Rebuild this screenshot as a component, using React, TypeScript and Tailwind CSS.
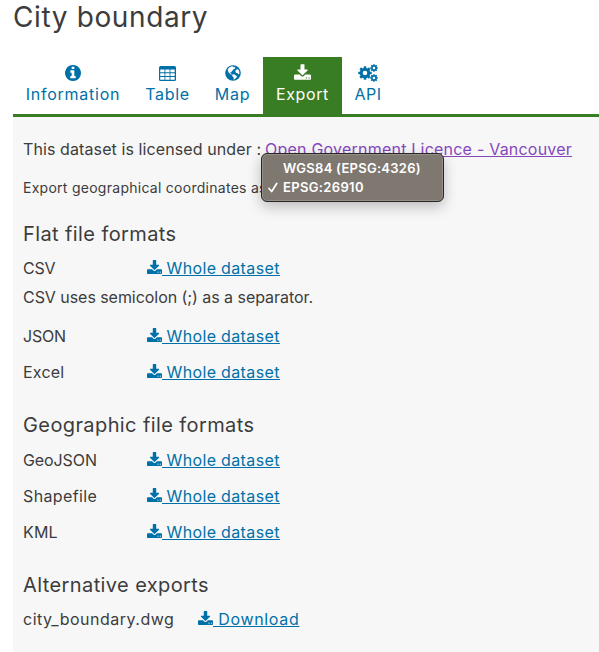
import type { ReactNode } from "react";

function DownloadIcon({ className }: { className: string }) {
  return (
    <svg viewBox="0 0 1664 1536" fill="currentColor" className={className}>
      <path d="M1280 1344q0-26-19-45t-45-19-45 19-19 45 19 45 45 19 45-19 19-45zm256 0q0-26-19-45t-45-19-45 19-19 45 19 45 45 19 45-19 19-45zm128-224v320q0 40-28 68t-68 28h-1472q-40 0-68-28t-28-68v-320q0-40 28-68t68-28h465l135 136q58 56 136 56t136-56l136-136h464q40 0 68 28t28 68zm-325-569q17 41-14 70l-448 448q-18 19-45 19t-45-19l-448-448q-31-29-14-70 17-39 59-39h256v-448q0-26 19-45t45-19h256q26 0 45 19t19 45v448h256q42 0 59 39z" />
    </svg>
  );
}

function InfoIcon() {
  return (
    <svg viewBox="128 128 1536 1536" fill="currentColor" className="size-4">
      <path d="M1152 1376v-160q0-14-9-23t-23-9h-96v-512q0-14-9-23t-23-9h-320q-14 0-23 9t-9 23v160q0 14 9 23t23 9h96v320h-96q-14 0-23 9t-9 23v160q0 14 9 23t23 9h448q14 0 23-9t9-23zm-128-896v-160q0-14-9-23t-23-9h-192q-14 0-23 9t-9 23v160q0 14 9 23t23 9h192q14 0 23-9t9-23zm640 416q0 209-103 385.500t-279.500 279.500-385.500 103-385.500-103-279.500-279.500-103-385.500 103-385.500 279.500-279.500 385.500-103 385.500 103 279.500 279.500 103 385.500z" />
    </svg>
  );
}

function TableIcon() {
  return (
    <svg viewBox="0 0 17 15" className="h-[15px] w-[17px]">
      <rect width="17" height="15" rx="1.500" fill="currentColor" />
      <g fill="#fff">
        {[3.6, 7.3, 11].map((y) =>
          [1.2, 6.3, 11.4].map((x) => <rect key={`${x}-${y}`} x={x} y={y} width="4.300" height="2.700" rx="0.300" />),
        )}
      </g>
    </svg>
  );
}

function GlobeIcon() {
  return (
    <svg viewBox="0 0 16 16" className="size-4">
      <circle cx="8" cy="8" r="7.800" fill="currentColor" />
      <path
        fill="#fff"
        d="M6.100 1.400 8.400 1.200 8 2.200 9.500 2 10.500 3 9.300 4 8.300 4.300 7.800 5.500 6.600 6.300 6.800 7.200 5.800 6.900 5.200 8 6.500 8.700 7 9.700 5.600 9.300 3.600 7.600 2.900 5.700 2.600 4.400 4.200 2.500ZM7.300 9.500 9 9.300 11.300 10.700 12.200 11.500 11 13.100 9.300 14.400 8.600 14.500 8.700 12.500 7.300 11.200ZM10.700 5.200 12 4.200 13.300 4.600 14.300 6.600 14.400 8.800 13.500 9.500 12.600 8.200 11.200 7.900 10.300 6.700Z"
      />
    </svg>
  );
}

function Gear({ x, y, r, hole }: { x: number; y: number; r: number; hole: number }) {
  return (
    <g transform={`translate(${x} ${y})`}>
      <circle r={(r * 0.78 + hole) / 2} fill="none" stroke="currentColor" strokeWidth={r * 0.78 - hole} />
      {[0, 45, 90, 135, 180, 225, 270, 315].map((a) => (
        <rect key={a} x={-r * 0.19} y={-r} width={r * 0.38} height={r * 0.35} fill="currentColor" transform={`rotate(${a})`} />
      ))}
    </g>
  );
}

function GearsIcon() {
  return (
    <svg viewBox="0 0 20 18" className="h-[18px] w-5">
      <Gear x={7} y={9} r={6.700} hole={2.300} />
      <Gear x={16} y={4} r={3.800} hole={1.300} />
      <Gear x={16} y={14} r={3.800} hole={1.300} />
    </svg>
  );
}

function Tab({ icon, active, className, children }: { icon: ReactNode; active?: boolean; className: string; children: ReactNode }) {
  return (
    <a className={`flex h-[57px] flex-col items-center pt-[7px] ${active ? "bg-[#387c24] text-white" : "text-[#0070a8]"} ${className}`}>
      <span className="flex h-[18px] items-center">{icon}</span>
      <span className="leading-6">{children}</span>
    </a>
  );
}

function Download({ children, className }: { children: ReactNode; className: string }) {
  return (
    <a className="flex items-center text-[#0070a8]">
      <DownloadIcon className="mb-0.5 h-3.5 w-[15px] shrink-0" />
      <span className={`whitespace-pre underline decoration-1 underline-offset-[1px] ${className}`}>{children}</span>
    </a>
  );
}

function Row({ label, className }: { label: string; className: string }) {
  return (
    <div className="flex h-6 leading-6">
      <span className={`w-[124px] ${className}`}>{label}</span>
      <Download className="tracking-[0.400px] [word-spacing:-0.400px]"> Whole dataset</Download>
    </div>
  );
}

function Heading({ children }: { children: ReactNode }) {
  return <h2 className="text-xl leading-7 tracking-[0.400px]">{children}</h2>;
}

export default function App() {
  return (
    <div className="h-[652px] w-[599px] overflow-hidden bg-white pl-[13px] font-['Inter',sans-serif] text-base whitespace-nowrap text-[#3c3c3c]">
      <h1 className="h-[57px] text-[28px] leading-[35px] tracking-[0.620px]">City boundary</h1>
      <nav className="flex h-[60px] border-b-[3px] border-[#387c24]">
        <Tab icon={<InfoIcon />} className="w-[120px] tracking-[0.750px]">Information</Tab>
        <Tab icon={<TableIcon />} className="w-[69px] tracking-[0.650px]">Table</Tab>
        <Tab icon={<GlobeIcon />} className="w-[61px] tracking-[0.800px]">Map</Tab>
        <Tab icon={<DownloadIcon className="mb-0.5 h-4 w-[17px]" />} active className="w-[79px] tracking-[0.600px]">Export</Tab>
        <Tab icon={<GearsIcon />} className="w-[52px] tracking-[0.500px]">API</Tab>
      </nav>
      <main className="h-[535px] bg-[#f7f7f7] pt-5 pl-2.5">
        <p className="flex h-6 leading-6">
          <span className="w-[242px] tracking-[0.100px]">This dataset is licensed under :</span>
          <a className="tracking-[0.220px] text-[#8648bd] underline decoration-1 underline-offset-[1px]">Open Government Licence - Vancouver</a>
        </p>
        <div className="relative mt-[17px] h-5 text-sm leading-5 tracking-[0.270px]">
          Export geographical coordinates as
          <div className="absolute -top-[25px] left-[238px] h-[49px] w-[183px] rounded-md border border-[#292624] bg-[#7f7871] pt-[5px] text-[13px] leading-[19px] font-semibold text-white shadow-[inset_0_0_0_1px_#958f89,0_5px_14px_rgba(0,0,0,0.240)]">
            <div className="pl-[21px] tracking-[0.270px]">WGS84 (EPSG:4326)</div>
            <div className="flex items-center tracking-[0.350px]">
              <svg viewBox="0 0 10 11" className="mr-[5px] ml-1.5 h-[11px] w-2.5" fill="none" stroke="currentColor" strokeWidth="1.700" strokeLinecap="round" strokeLinejoin="round">
                <path d="M1 6.500 3.700 9.500 8.700 1.500" />
              </svg>
              EPSG:26910
            </div>
          </div>
        </div>
        <section className="mt-[22px]">
          <Heading>Flat file formats</Heading>
          <div className="mt-2">
            <Row label="CSV" className="-tracking-[0.200px]" />
            <p className="mt-[5px] h-6 leading-6 -tracking-[0.050px]">CSV uses semicolon (;) as a separator.</p>
          </div>
          <div className="mt-[15px] flex flex-col gap-3">
            <Row label="JSON" className="-tracking-[0.200px]" />
            <Row label="Excel" className="tracking-[0.200px]" />
          </div>
        </section>
        <section className="mt-[27px]">
          <Heading>Geographic file formats</Heading>
          <div className="mt-[9px] flex flex-col gap-3">
            <Row label="GeoJSON" className="-tracking-[0.100px]" />
            <Row label="Shapefile" className="tracking-[0.370px]" />
            <Row label="KML" className="tracking-[0.200px]" />
          </div>
        </section>
        <section className="mt-[27px]">
          <Heading>Alternative exports</Heading>
          <div className="mt-2 flex h-6 leading-6">
            <span className="w-[175px] tracking-[0.500px]">city_boundary.dwg</span>
            <Download className="tracking-[0.680px]"> Download</Download>
          </div>
        </section>
      </main>
    </div>
  );
}
